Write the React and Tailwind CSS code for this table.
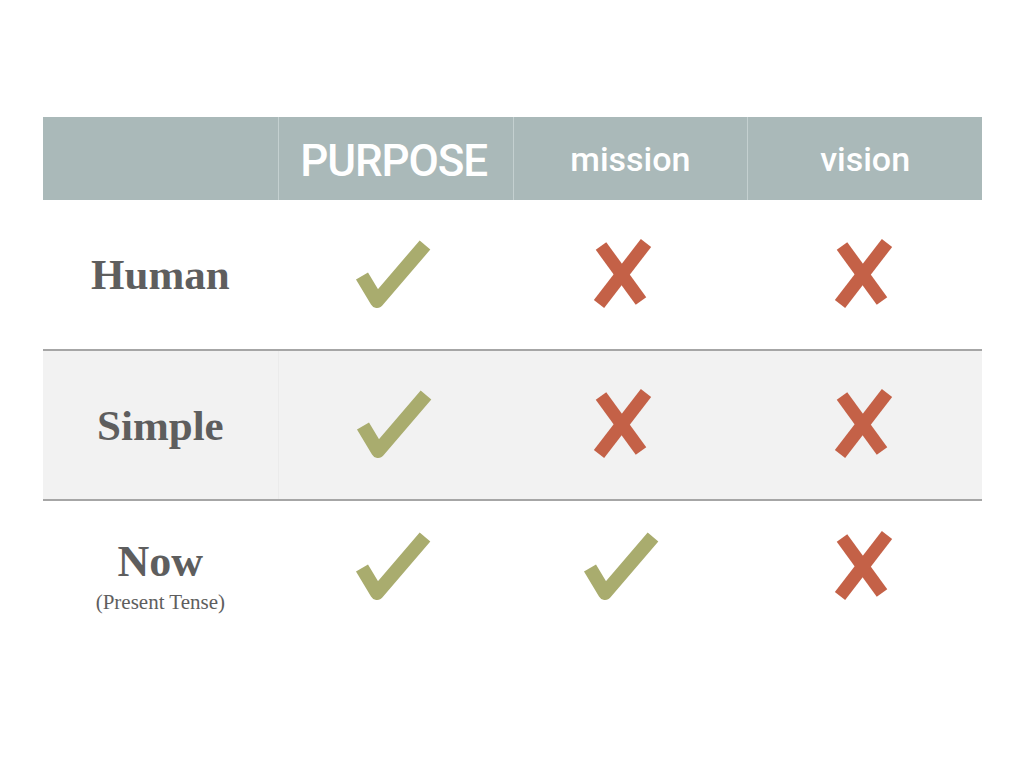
import React from 'react';

const Check = () => (
  <svg width="78" height="72" viewBox="0 0 78 72" fill="none">
    <path d="M8 39 L23 64 L71 8" stroke="#a9ac6e" strokeWidth="14" strokeLinejoin="round" />
  </svg>
);

const Cross = () => (
  <svg width="62" height="72" viewBox="0 0 62 72" fill="none">
    <path d="M11 9 L51 64" stroke="#c46147" strokeWidth="13" />
    <path d="M56 6 L9 67" stroke="#c46147" strokeWidth="13" />
  </svg>
);

const serif = { fontFamily: '"Liberation Serif", serif' };

const Mark = ({ ok }) => (ok ? <Check /> : <Cross />);

// per column horizontal nudge, the marks are not quite centered in the source
const colPad = ['pr-[4px]', 'pr-[18px]', 'pr-[6px]'];

const rows = [
  { label: 'Human', marks: [true, false, false], bg: 'bg-white', h: 'h-[151px]' },
  { label: 'Simple', marks: [true, false, false], bg: 'bg-[#f2f2f2]', h: 'h-[150px]' },
];

export default function App() {
  return (
    <div className="w-[1024px] h-[768px] bg-white pt-[117px] px-[43px]">
      <div className="w-[939px]">
        {/* header */}
        <div
          className="grid grid-cols-4 h-[83px] bg-[#aab9b9] text-white"
          style={{ fontFamily: 'Roboto, "Open Sans", sans-serif' }}
        >
          <div />
          <div className="flex items-center justify-center border-l border-[#c4d0d0] text-[44px] font-medium tracking-tight pt-1 pr-1">
            PURPOSE
          </div>
          <div className="flex items-center justify-center border-l border-[#c4d0d0] text-[34px] font-medium pt-[2px]">
            mission
          </div>
          <div className="flex items-center justify-center border-l border-[#c4d0d0] text-[34px] font-medium pt-[2px]">
            vision
          </div>
        </div>

        {rows.map((r) => (
          <div key={r.label} className={`grid grid-cols-4 ${r.h} ${r.bg} border-b-2 border-[#a6a6a6]`}>
            <div
              className="flex items-center justify-center pt-[2px] text-[43px] font-bold text-[#5e5e5e]"
              style={serif}
            >
              {r.label}
            </div>
            {r.marks.map((m, i) => (
              <div
                key={i}
                className={`flex items-center justify-center pb-[4px] ${colPad[i]} ${
                  r.bg === 'bg-white' || i > 0 ? '' : 'border-l border-[#ebebeb]'
                }`}
              >
                <Mark ok={m} />
              </div>
            ))}
          </div>
        ))}

        {/* last row */}
        <div className="grid grid-cols-4 h-[125px] bg-white">
          <div className="flex flex-col items-center pt-[36px] text-[#5e5e5e]" style={serif}>
            <span className="text-[44px] leading-[50px] font-bold">Now</span>
            <span className="text-[21px] leading-[24px] mt-[3px]">(Present Tense)</span>
          </div>
          <div className={`flex justify-center pt-[28px] ${colPad[0]}`}>
            <Check />
          </div>
          <div className={`flex justify-center pt-[28px] ${colPad[1]}`}>
            <Check />
          </div>
          <div className={`flex justify-center pt-[28px] ${colPad[2]}`}>
            <Cross />
          </div>
        </div>
      </div>
    </div>
  );
}
